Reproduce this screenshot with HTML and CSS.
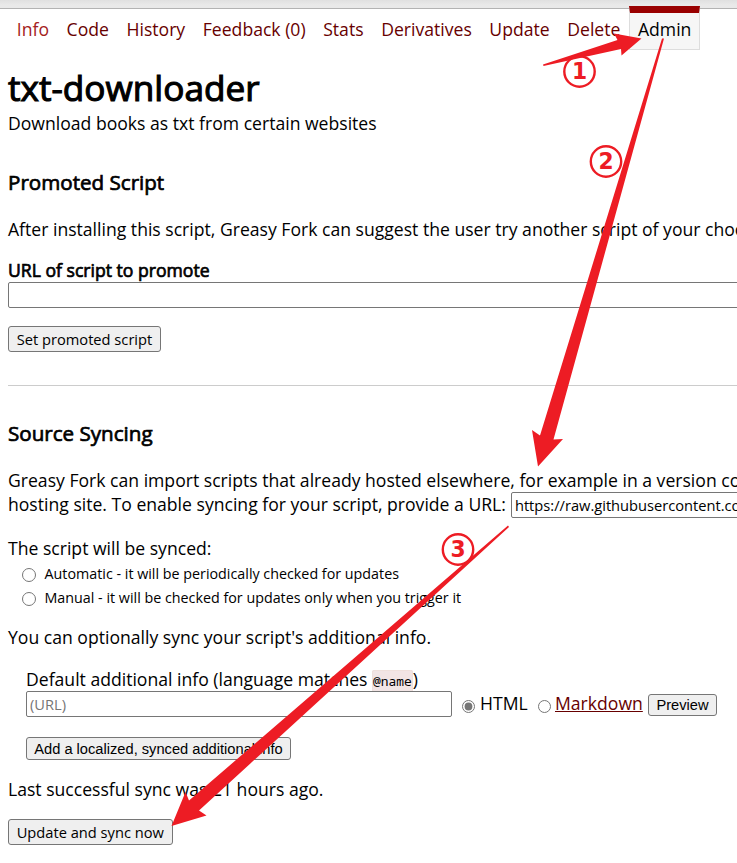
FILE: index.html
```html
<!DOCTYPE html>
<html lang="en">
<head>
<meta charset="utf-8">
<title>txt-downloader</title>
<link rel="stylesheet" href="styles.css">
</head>
<body>
<header class="strip"></header>
<main class="page">
  <nav class="tabs">
    <a class="tab tab-info">Info</a><a class="tab">Code</a><a class="tab">History</a><a class="tab">Feedback (0)</a><a class="tab">Stats</a><a class="tab">Derivatives</a><a class="tab">Update</a><a class="tab">Delete</a><span class="tab current">Admin</span>
  </nav>
  <h1>txt-downloader</h1>
  <p class="description">Download books as txt from certain websites</p>

  <h3>Promoted Script</h3>
  <p class="intro">After installing this script, Greasy Fork can suggest the user try another script of your choosing.</p>
  <label class="bold-label">URL of script to promote</label>
  <input class="field wide" type="text">
  <button class="button">Set promoted script</button>
  <hr>

  <h3>Source Syncing</h3>
  <p class="intro">Greasy Fork can import scripts that already hosted elsewhere, for example in a version control</p>
  <div class="url-line"><span>hosting site. To enable syncing for your script, provide a URL:</span><input class="field sync-url" type="text" value="https://raw.githubusercontent.com/"></div>

  <p class="sync-type">The script will be synced:</p>
  <label class="choice"><input type="radio">Automatic - it will be periodically checked for updates</label>
  <label class="choice"><input type="radio">Manual - it will be checked for updates only when you trigger it</label>

  <p class="optional">You can optionally sync your script's additional info.</p>
  <section class="additional">
    <p class="info-label">Default additional info (language matches <code>@name</code>)</p>
    <div class="info-row">
      <input class="field info-url" type="text" placeholder="(URL)">
      <input class="format" type="radio" checked><span class="html">HTML</span>
      <input class="format" type="radio"><a class="markdown">Markdown</a>
      <button class="plain preview">Preview</button>
    </div>
    <button class="plain add">Add a localized, synced additional info</button>
  </section>
  <p class="last">Last successful sync was 21 hours ago.</p>
  <button class="button">Update and sync now</button>
</main>

<svg class="annotations" width="737" height="863" viewBox="0 0 737 863">
  <polygon points="543,64.5 617.5,40 614,33.5 641.5,38.5 621.5,55.5 621,49 543.5,66"/>
  <polygon points="662,38.5 664,38.5 553.5,439.5 563,439 538,466.5 532,430 540,435.5"/>
  <polygon points="508,525.5 509,527 199,810.5 206.5,815.5 171.5,826 185.5,792 189,800.5"/>
  <circle cx="579.5" cy="71.5" r="15.2"/><text transform="translate(579.5 79.3) scale(.95 1)">1</text>
  <circle cx="606" cy="161.5" r="15.2"/><text transform="translate(606 169.3) scale(.95 1)">2</text>
  <circle cx="458" cy="549.5" r="15.2"/><text transform="translate(458 557.3) scale(.95 1)">3</text>
</svg>
</body>
</html>
```
FILE: styles.css
```css
* { box-sizing: border-box; }
body {
  margin: 0;
  height: 863px;
  overflow: hidden;
  position: relative;
  background: #fff;
  color: #000;
  font: 17.6px/24px "Open Sans", sans-serif;
}
.strip {
  height: 9px;
  background: linear-gradient(#e0e0e0, #e9e9e9 60%);
  border-bottom: 1px solid #b3b3b3;
}
.page {
  height: 857px;
  margin-top: -3px;
  padding: 0 0 0 8px;
  overflow: hidden;
  white-space: nowrap;
}
p { margin: 0; }
.tabs { display: flex; }
.tab {
  height: 44px;
  padding: 11px 8.8px 0;
  color: #670000;
}
.tab-info { color: #a42121; }
.tab.current {
  padding: 4px 7.8px 0;
  color: #000;
  background: #f6f6f6;
  border: 1px solid #ddd;
  border-top: 7px solid #900;
}
h1, h3, .bold-label { font-weight: 400; -webkit-text-stroke: 0.7px #000; }
h1 {
  margin: 17px 0 4px;
  font-size: 35.2px;
  line-height: 40px;
  -webkit-text-stroke-width: 1.1px;
}
h3 { margin: 35px 0 23px; font-size: 20.6px; line-height: 24px; }
.bold-label { display: block; margin-top: 17px; }
.field {
  display: block;
  height: 26px;
  padding: 1px 3px;
  border: 1px solid #767676;
  border-radius: 2px;
  background: #fff;
  color: #000;
  font: 14.67px "Open Sans", sans-serif;
}
.field::placeholder { color: #757575; }
.wide { width: 900px; }
.button {
  display: block;
  height: 26px;
  margin-top: 18px;
  padding: 0 7.7px;
  border: 1px solid #767676;
  border-radius: 3px;
  background: #efefef;
  color: #000;
  font: 14.67px "Open Sans", sans-serif;
}
hr { width: 900px; margin: 33px 0 0; border: 0; border-top: 1px solid #ccc; }
.url-line { display: flex; height: 24px; }
.sync-url { flex: none; width: 500px; margin-left: 5px; }
.sync-type { margin-top: 20px; }
.choice {
  display: flex;
  align-items: center;
  height: 24px;
  padding-left: 14px;
  font-size: 14.3px;
  position: relative;
  top: 2px;
}
.choice input { width: 14px; height: 14px; margin: 2px 8.5px 0 0; }
.optional { margin-top: 17px; }
.additional { margin: 18px 0 0 18px; }
.info-label { height: 24px; }
code {
  padding: 1px 0;
  border: 1px solid #efe0dc;
  border-radius: 2px;
  background: #f2e5e5;
  font: 12.9px/16px "Noto Sans Mono", "DejaVu Sans Mono", monospace;
}
.info-row { display: flex; height: 26px; }
.info-url { width: 426px; }
.format { width: 13px; height: 13px; margin: 9px 5px 0 10px; accent-color: #767676; }
.html { width: 48px; }
.html + .format { margin-right: 4px; }
.markdown { width: 88px; color: #670000; text-decoration: underline; }
.plain {
  padding: 0;
  border: 1px solid #767676;
  border-radius: 3px;
  background: #efefef;
  color: #000;
  font: 14.67px "Liberation Sans", sans-serif;
}
.preview { width: 69px; height: 22px; margin: 3px 0 0 5px; }
.add { display: block; width: 265px; height: 23px; margin-top: 20px; }
.last { margin-top: 17px; }
.annotations { position: absolute; top: 0; left: 0; fill: #ed1c24; }
.annotations circle { fill: none; stroke: #ed1c24; stroke-width: 2.4; }
.annotations text { font: bold 23px "DejaVu Sans", sans-serif; text-anchor: middle; }
```
